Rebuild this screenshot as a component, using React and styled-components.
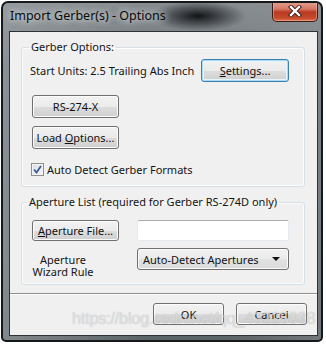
import React from "react";
import styled, { createGlobalStyle, css } from "styled-components";

const GlobalStyle = createGlobalStyle`
  html, body {
    margin: 0;
    padding: 0;
    background: #ffffff;
  }
  body {
    font-family: "Noto Sans", "Liberation Sans", sans-serif;
  }
`;

const Window = styled.div`
  position: relative;
  box-sizing: border-box;
  margin: 1px 0 0 1px;
  width: 322px;
  height: 341px;
  border: 2px solid #15191c;
  border-radius: 7px 7px 5px 5px;
  display: flex;
  flex-direction: column;
  overflow: hidden;
  background:
    radial-gradient(ellipse 48px 15px at 195px 13px, rgba(12, 14, 17, 0.95), rgba(12, 14, 17, 0) 100%),
    linear-gradient(90deg, rgba(160, 166, 170, 0.55), rgba(160, 166, 170, 0) 45%, rgba(0, 0, 0, 0) 70%, rgba(150, 155, 160, 0.35)),
    linear-gradient(180deg, #868c90 0%, #70777c 20%, #5d6468 100%);
`;

const TitleBar = styled.div`
  height: 28px;
  display: flex;
  align-items: flex-start;
  justify-content: space-between;
  padding: 0 3px 0 7px;
`;

const Title = styled.div`
  margin-top: 5px;
  font-size: 12.5px;
  line-height: 16px;
  color: #0a0a0a;
  text-shadow: 0 0 6px rgba(235, 238, 240, 0.9), 0 0 10px rgba(235, 238, 240, 0.7);
`;

const CloseButton = styled.div`
  margin-top: -2px;
  width: 46px;
  height: 21px;
  box-sizing: border-box;
  border: 1px solid #3a1c16;
  border-top: none;
  border-radius: 0 0 5px 5px;
  display: flex;
  align-items: center;
  justify-content: center;
  background: linear-gradient(180deg, #e6a595 0%, #d47a66 40%, #b93a22 55%, #c44a2c 85%, #e0704c 100%);
  box-shadow: inset 0 0 0 1px rgba(255, 200, 180, 0.45);
`;

const Client = styled.div`
  flex: 1;
  margin: 0 3px 4px 6px;
  border: 1px solid #2c3236;
  background: #f0f0f0;
  display: flex;
  flex-direction: column;
  font-size: 11px;
  color: #141414;
`;

const Group = styled.fieldset`
  margin: ${(p) => p.$top}px 12px 0 11px;
  padding: ${(p) => p.$pt}px 15px ${(p) => p.$pb}px 9px;
  border: 1px solid #d5dfe5;
  border-radius: 3px;
  box-shadow: inset 0 0 0 1px #fbfcfc;
  min-inline-size: 0;
  display: flex;
  flex-direction: column;
`;

const Legend = styled.legend`
  margin-left: ${(p) => p.$indent}px;
  padding: 0 2px;
  line-height: 14px;
  white-space: nowrap;
  color: #141414;
`;

const Row = styled.div`
  display: flex;
  align-items: ${(p) => p.$align || "center"};
  justify-content: space-between;
  margin-top: ${(p) => p.$mt || 0}px;
`;

const Text = styled.span`
  margin-left: -1px;
  white-space: nowrap;
`;

const buttonLook = css`
  box-sizing: border-box;
  border: 1px solid #707070;
  border-radius: 3px;
  background: linear-gradient(180deg, #f2f2f2 0%, #ebebeb 50%, #dddddd 51%, #cfcfcf 100%);
  box-shadow: inset 0 0 0 1px #fcfcfc;
`;

const Button = styled.div`
  ${buttonLook}
  width: ${(p) => p.$w}px;
  height: ${(p) => p.$h || 23}px;
  margin-top: ${(p) => p.$mt || 0}px;
  margin-left: ${(p) => p.$ml || 0}px;
  display: flex;
  align-items: center;
  justify-content: center;
  flex-shrink: 0;
  font-size: 11px;
  color: #111;
  ${(p) =>
    p.$focused &&
    css`
      border-color: #3c7fb1;
      box-shadow: inset 0 0 0 1px #a9dcf4, inset 0 0 0 2px #e6f4fb;
    `}
`;

const Key = styled.span`
  text-decoration: underline;
`;

const CheckRow = styled.div`
  display: flex;
  align-items: center;
  gap: 3px;
  margin-top: 14px;
  height: 13px;
`;

const CheckBox = styled.div`
  width: 13px;
  height: 13px;
  box-sizing: border-box;
  border: 1px solid #8e8f8f;
  background: linear-gradient(135deg, #dcdcdc, #f8f8f8);
  display: flex;
  align-items: center;
  justify-content: center;
  box-shadow: inset 0 0 0 1px #f4f4f4;
`;

const Input = styled.div`
  box-sizing: border-box;
  width: 152px;
  height: 21px;
  background: #ffffff;
  border: 1px solid #e3e9ef;
  border-top-color: #abadb3;
  border-radius: 2px;
`;

const WizardLabel = styled.div`
  width: 64px;
  margin-top: 6px;
  text-align: center;
  line-height: 12px;
`;

const Select = styled.div`
  box-sizing: border-box;
  width: 152px;
  height: 22px;
  border: 1px solid #707070;
  border-radius: 3px;
  background: linear-gradient(180deg, #f2f2f2 0%, #ebebeb 50%, #e2e2e2 51%, #dadada 100%);
  box-shadow: inset 0 0 0 1px #fafafa;
  display: flex;
  align-items: center;
  justify-content: space-between;
  padding: 0 8px 0 5px;
`;

const Arrow = styled.span`
  width: 0;
  height: 0;
  border-left: 4px solid transparent;
  border-right: 4px solid transparent;
  border-top: 4px solid #111;
`;

const Separator = styled.div`
  margin-top: 8px;
  border-top: 1px solid #8f8f8f;
  border-bottom: 1px solid #ffffff;
`;

const Footer = styled.div`
  display: flex;
  justify-content: flex-end;
  gap: 12px;
  margin-top: 8px;
  padding-right: 10px;
`;

const Watermark = styled.div`
  position: absolute;
  left: 69px;
  top: 306px;
  font-family: "Liberation Sans", Arial, sans-serif;
  font-size: 16.5px;
  letter-spacing: -0.3px;
  color: rgba(255, 255, 255, 0.55);
  text-shadow: 0 0 1px rgba(120, 120, 120, 0.55);
  pointer-events: none;
  white-space: nowrap;
`;

const CloseGlyph = () => (
  <svg width="14" height="12" viewBox="0 0 14 12">
    <path d="M3 2 L11 10 M11 2 L3 10" stroke="#3a1a14" strokeWidth="4.2" strokeLinecap="square" />
    <path d="M3 2 L11 10 M11 2 L3 10" stroke="#ffffff" strokeWidth="2.4" strokeLinecap="square" />
  </svg>
);

const CheckMark = () => (
  <svg width="9" height="9" viewBox="0 0 9 9">
    <path d="M1 4.5 L3.5 7.5 L8 1" fill="none" stroke="#3b5a9a" strokeWidth="1.8" />
  </svg>
);

export default function App() {
  return (
    <>
      <GlobalStyle />
      <Window>
        <TitleBar>
          <Title>Import Gerber(s) - Options</Title>
          <CloseButton>
            <CloseGlyph />
          </CloseButton>
        </TitleBar>
        <Client>
          <Group $top={8} $pt={5} $pb={10}>
            <Legend $indent={-2}>Gerber Options:</Legend>
            <Row>
              <Text>Start Units: 2.5 Trailing Abs Inch</Text>
              <Button $w={88} $focused>
                <span>
                  <Key>S</Key>ettings...
                </span>
              </Button>
            </Row>
            <Button $w={87} $mt={13} $ml={1}>
              RS-274-X
            </Button>
            <Button $w={87} $mt={8} $ml={1}>
              <span>
                Load <Key>O</Key>ptions...
              </span>
            </Button>
            <CheckRow>
              <CheckBox>
                <CheckMark />
              </CheckBox>
              <span>Auto Detect Gerber Formats</span>
            </CheckRow>
          </Group>
          <Group $top={8} $pt={11} $pb={6}>
            <Legend $indent={-4}>Aperture List (required for Gerber RS-274D only)</Legend>
            <Row>
              <Button $w={87} $h={21} $ml={1}>
                <span>
                  <Key>A</Key>perture File...
                </span>
              </Button>
              <Input />
            </Row>
            <Row $mt={7} $align="flex-start">
              <WizardLabel>
                Aperture
                <br />
                Wizard Rule
              </WizardLabel>
              <Select>
                <span>Auto-Detect Apertures</span>
                <Arrow />
              </Select>
            </Row>
          </Group>
          <Separator />
          <Footer>
            <Button $w={71} $h={22}>
              OK
            </Button>
            <Button $w={71} $h={22}>
              Cancel
            </Button>
          </Footer>
        </Client>
        <Watermark>https://blog.csdn.net/qq_43225938</Watermark>
      </Window>
    </>
  );
}
